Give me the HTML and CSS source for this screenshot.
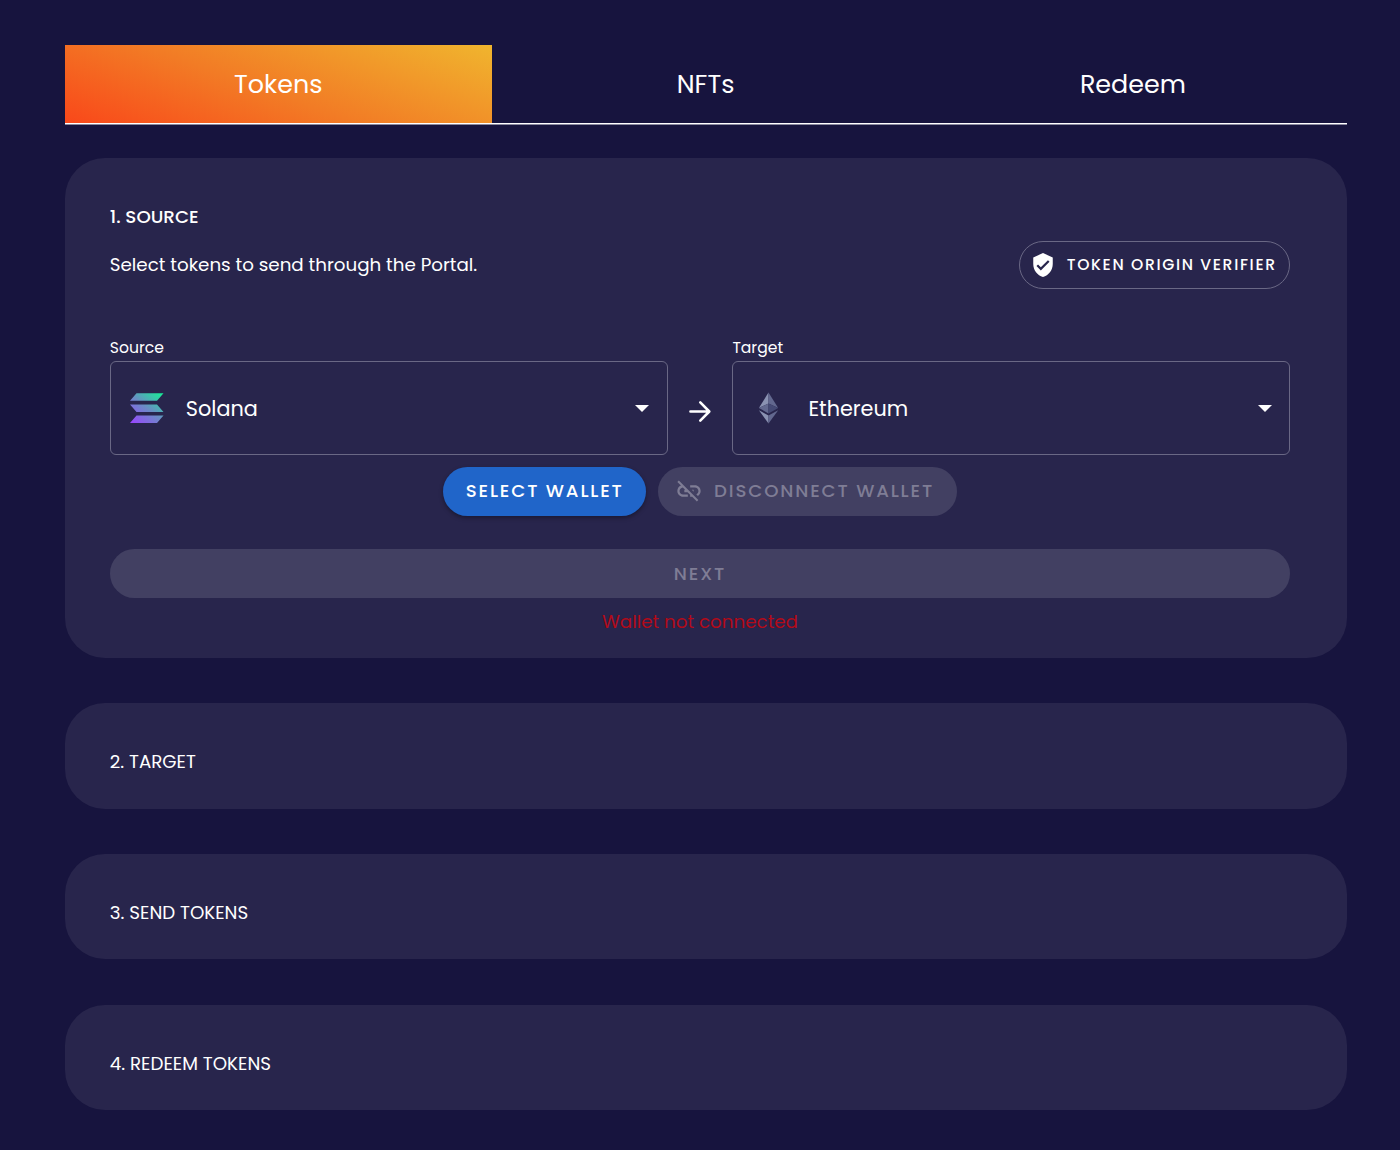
FILE: index.html
```html
<!DOCTYPE html>
<html lang="en">
<head>
<meta charset="utf-8">
<title>Portal</title>
<link rel="stylesheet" href="styles.css">
</head>
<body>
<main class="page">
  <nav class="tabs">
    <a class="tab tab-active">Tokens</a>
    <a class="tab">NFTs</a>
    <a class="tab">Redeem</a>
  </nav>
  <section class="card card-open">
    <h2 class="step step-current">1. SOURCE</h2>
    <div class="intro">
      <p class="lead">Select tokens to send through the Portal.</p>
      <button class="verifier">
        <svg class="shield" viewBox="0 0 24 24"><path d="M12 1L3 5v6c0 5.55 3.84 10.74 9 12 5.16-1.26 9-6.45 9-12V5l-9-4zm-2 16l-4-4 1.41-1.41L10 14.17l6.59-6.59L18 9l-8 8z"/></svg>
        <span>TOKEN ORIGIN VERIFIER</span>
      </button>
    </div>
    <div class="chains">
      <div class="field">
        <label class="label">Source</label>
        <div class="select">
          <svg class="coin" viewBox="0 0 34 30">
            <defs><linearGradient id="sol" gradientUnits="userSpaceOnUse" x1="4" y1="32" x2="30" y2="-2"><stop offset="0" stop-color="#9945ff"/><stop offset=".5" stop-color="#6a8cc4"/><stop offset="1" stop-color="#14f195"/></linearGradient></defs>
            <path fill="url(#sol)" d="M6.5 0.300H33.500l-6.500 7.500H0zM0 11.500h27l6.500 7.500H6.500zM6.500 22.600H33.500l-6.500 7.400H0z"/>
          </svg>
          <span class="chain">Solana</span>
          <svg class="caret" viewBox="0 0 14 7"><path d="M0 0h14L7 7z"/></svg>
        </div>
      </div>
      <svg class="arrow" viewBox="0 0 24 24"><path d="M5 12h13.300M12.600 5l7 7-7 7" fill="none" stroke="#fff" stroke-width="2" stroke-linecap="round" stroke-linejoin="round"/></svg>
      <div class="field">
        <label class="label">Target</label>
        <div class="select">
          <svg class="coin" viewBox="0 0 34 30">
            <path fill="#8a92b2" d="M16.500-.5v10.900L6.900 15z"/><path fill="#62688f" d="M16.500-.5v10.900L26.200 15z"/>
            <path fill="#62688f" d="M6.900 15l9.600-4.600v10z"/><path fill="#454a75" d="M26.200 15l-9.700-4.600v10z"/>
            <path fill="#8a92b2" d="M6.900 17.200l9.600 5.300v8z"/><path fill="#62688f" d="M26.200 17.200l-9.700 5.300v8z"/>
          </svg>
          <span class="chain">Ethereum</span>
          <svg class="caret" viewBox="0 0 14 7"><path d="M0 0h14L7 7z"/></svg>
        </div>
      </div>
    </div>
    <div class="wallet">
      <button class="btn btn-primary"><span>SELECT WALLET</span></button>
      <button class="btn btn-off btn-disconnect">
        <svg class="unlink" viewBox="0 0 24 24"><path d="M14.390 11L16 12.610V11zM17 7h-4v1.900h4c1.710 0 3.100 1.390 3.100 3.100 0 1.270-.77 2.370-1.870 2.840l1.400 1.400C21.050 15.360 22 13.790 22 12c0-2.760-2.240-5-5-5zM2 4.270l3.110 3.110C3.290 8.120 2 9.910 2 12c0 2.760 2.240 5 5 5h4v-1.900H7c-1.710 0-3.100-1.390-3.100-3.100 0-1.590 1.210-2.900 2.760-3.070L8.730 11H8v2h2.730L13 15.270V17h1.730l4.010 4L20 19.740 3.270 3 2 4.270z"/></svg>
        <span>DISCONNECT WALLET</span>
      </button>
    </div>
    <button class="btn btn-off btn-next"><span>NEXT</span></button>
    <p class="error">Wallet not connected</p>
  </section>
  <section class="card"><h2 class="step">2. TARGET</h2></section>
  <section class="card"><h2 class="step">3. SEND TOKENS</h2></section>
  <section class="card"><h2 class="step">4. REDEEM TOKENS</h2></section>
</main>
</body>
</html>
```
FILE: styles.css
```css
* { box-sizing: border-box; }
body { margin: 0; background: #17143e; color: #fff; font-family: Poppins, Inter, "Liberation Sans", sans-serif; }
h2, p { margin: 0; font-weight: 400; }
svg { display: block; flex: none; fill: #fff; overflow: visible; }
button { font: inherit; color: inherit; border: 0; margin: 0; }
.page { width: 1346.600px; min-height: 1150px; padding: 45px 0 0 64.600px; display: flex; flex-direction: column; gap: 45.200px; }
.tabs { display: flex; height: 79px; border-bottom: 1px solid #fff; box-shadow: 0 1px 0 rgba(255,255,255,.5); margin-bottom: -10.900px; }
.tab { flex: 1; display: flex; align-items: center; justify-content: center; padding-top: 1px; font-size: 25.400px; font-weight: 400; white-space: nowrap; }
.tab-active { background: linear-gradient(20deg, #f9481a 0%, #f27b25 45%, #f0b52e 100%); }
.card { height: 105.700px; border-radius: 40px; background: #28254c; padding: 45px 56.400px 0 45.200px; }
.card-open { height: 499.400px; padding-top: 44.300px; }
.step { font-size: 18.300px; line-height: 28px; white-space: nowrap; }
.step-current { font-weight: 500; }
.intro { display: flex; align-items: center; justify-content: space-between; height: 48px; margin-top: 10.200px; }
.lead { font-size: 18.300px; white-space: nowrap; }
.verifier { display: flex; align-items: center; width: 271.500px; height: 48px; padding: 0 0 0 10px; border: 1px solid #6a6885; border-radius: 24px; background: none; font-size: 15.600px; font-weight: 500; letter-spacing: 1.660px; white-space: nowrap; }
.shield { width: 26px; height: 26px; margin-right: 11px; }
.chains { display: flex; justify-content: space-between; margin-top: 48px; }
.field { width: 557.800px; }
.label { display: block; font-size: 15.600px; line-height: 20px; height: 24.500px; padding-top: 1px; }
.select { display: flex; align-items: center; height: 94px; border: 1px solid #6a6885; border-radius: 6px; padding: 0 17.300px 0 19px; }
.coin { width: 34px; height: 30px; margin-right: 22px; }
.chain { font-size: 20.800px; }
.caret { width: 14px; height: 7px; margin-left: auto; }
.arrow { width: 31px; height: 31px; margin-top: 59px; }
.wallet { display: flex; justify-content: center; gap: 11.500px; margin-top: 11.300px; }
.btn { display: flex; align-items: center; justify-content: center; height: 49px; border-radius: 24.500px; padding: 0; font-size: 18.200px; font-weight: 500; letter-spacing: 1.850px; white-space: nowrap; }
.wallet .btn span { padding-bottom: 1px; }
.btn-primary { width: 203.500px; background: #2065c9; box-shadow: 0 2px 4px rgba(0,0,0,.35); }
.btn-off { background: #424062; color: #7f7d95; }
.btn-disconnect { width: 299px; justify-content: flex-start; padding-left: 17px; }
.unlink { width: 28px; height: 28px; margin-right: 11px; fill: #7f7d95; }
.btn-next { width: 100%; margin-top: 33.600px; }
.error { text-align: center; color: #b30a19; font-size: 18.300px; line-height: 28px; margin-top: 9.800px; }
```
